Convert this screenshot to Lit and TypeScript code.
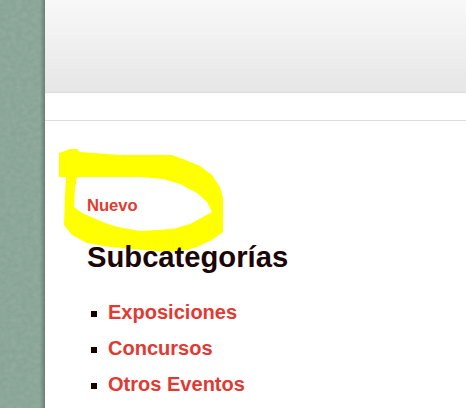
import { css, html, LitElement } from 'lit';
import { customElement } from 'lit/decorators.js';

const SUBCATEGORIES = ['Exposiciones', 'Concursos', 'Otros Eventos'];

@customElement('app-root')
export class AppRoot extends LitElement {
  static styles = css`
    :host {
      display: grid;
      grid-template-columns: 45px 1fr;
      height: 408px;
      overflow: hidden;
      background: #fff;
      font-family: 'Liberation Sans', Arial, sans-serif;
      font-weight: 700;
    }

    .side {
      position: relative;
      background: #87a496;
      overflow: hidden;
    }

    .side svg {
      display: block;
      width: 45px;
      height: 408px;
    }

    .side::after {
      content: '';
      position: absolute;
      inset: 0;
      background: linear-gradient(90deg, transparent 40px, rgba(60, 80, 70, 0.45));
    }

    .main {
      position: relative;
      min-width: 0;
    }

    .top {
      height: 92px;
      background: linear-gradient(#f8f8f8, #e6e6e6);
      border-bottom: 1px solid #dcdcdc;
    }

    .strip {
      height: 27px;
      border-bottom: 1px solid #dddddd;
    }

    .content {
      position: relative;
      padding: 75px 0 0 42px;
    }

    .new {
      display: block;
      font-size: 16.6px;
      line-height: 19px;
      color: #e03a32;
    }

    h2 {
      margin: 25px 0 0;
      font-size: 29.2px;
      line-height: 34px;
      font-weight: 700;
      color: #1c0606;
    }

    ul {
      list-style: none;
      margin: 26px 0 0;
      padding: 0 0 0 4px;
      display: grid;
      gap: 12px;
    }

    li {
      display: flex;
      align-items: center;
      gap: 11px;
      height: 24px;
      font-size: 20.05px;
      color: #e03a32;
    }

    li::before {
      content: '';
      width: 6px;
      height: 6px;
      margin-top: 4px;
      background: #120303;
    }

    .scribble {
      position: absolute;
      left: 0;
      top: 0;
      width: 466px;
      height: 408px;
      pointer-events: none;
    }
  `;

  render() {
    return html`
      <div class="side">
        <svg viewBox="0 0 45 408" aria-hidden="true">
          <filter id="grain">
            <feTurbulence type="fractalNoise" baseFrequency="0.18 0.22" numOctaves="3" seed="4" />
            <feColorMatrix values="0 0 0 0 0.4  0 0 0 0 0.52  0 0 0 0 0.46  0.55 0 0 0 -0.14" />
          </filter>
          <rect width="45" height="408" filter="url(#grain)" />
        </svg>
      </div>
      <div class="main">
        <div class="top"></div>
        <div class="strip"></div>
        <svg class="scribble" viewBox="45 0 466 408" aria-hidden="true">
          <path
            fill="#ffff00"
            fill-rule="evenodd"
            d="M59 153 L70 149 L77 149 L80 152 L120 155 L172 155 L183 159 L200 166 L212 175 L220 187 L223 198 L223 232
               L212 240 L197 247 L187 250 L165 252 L145 250 L110 247 L87 243 L72 235 L64 225 L65 195 L66 177 L59 177 Z
               M77 177 L140 177 L163 179 L180 184 L197 193 L207 202 L212 212 L203 217 L190 224 L173 229 L140 231
               L118 227 L105 223 L82 213 L74 207 L75 188 Z"
          />
        </svg>
        <div class="content">
          <span class="new">Nuevo</span>
          <h2>Subcategorías</h2>
          <ul>
            ${SUBCATEGORIES.map((name) => html`<li>${name}</li>`)}
          </ul>
        </div>
      </div>
    `;
  }
}

declare global {
  interface HTMLElementTagNameMap {
    'app-root': AppRoot;
  }
}
